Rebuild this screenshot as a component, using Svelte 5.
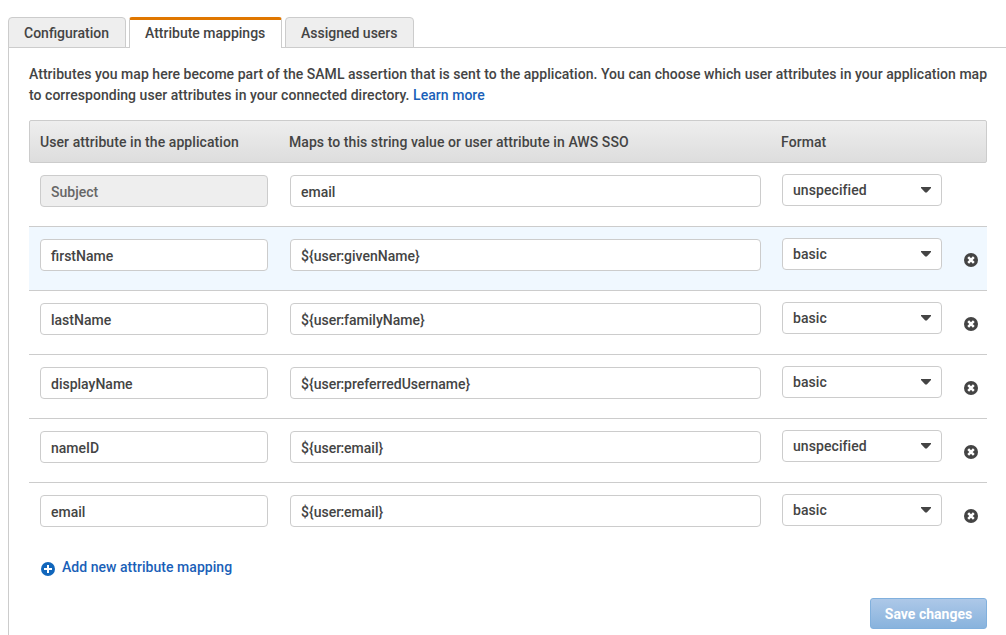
<script>
  const tabs = ['Configuration', 'Attribute mappings', 'Assigned users'];
  const active = 1;
  const rows = [
    { name: 'Subject', value: 'email', format: 'unspecified', locked: true },
    { name: 'firstName', value: '${user:givenName}', format: 'basic', hover: true },
    { name: 'lastName', value: '${user:familyName}', format: 'basic' },
    { name: 'displayName', value: '${user:preferredUsername}', format: 'basic' },
    { name: 'nameID', value: '${user:email}', format: 'unspecified' },
    { name: 'email', value: '${user:email}', format: 'basic' }
  ];
</script>

<div class="page">
  <nav class="tabs">
    {#each tabs as tab, i}
      <div class="tab" class:active={i === active}>{tab}</div>
    {/each}
  </nav>
  <main class="panel">
    <p class="intro">
      Attributes you map here become part of the SAML assertion that is sent to the application. You can choose which user attributes in your application map<br />to corresponding user attributes in your connected directory. <span class="link">Learn more</span>
    </p>
    <div class="head">
      <div>User attribute in the application</div>
      <div>Maps to this string value or user attribute in AWS SSO</div>
      <div>Format</div>
    </div>
    {#each rows as row}
      <div class="row" class:hover={row.hover}>
        <div class="field name" class:locked={row.locked}>{row.name}</div>
        <div class="field value">
          {#if row.value.includes(':')}<span class="tight">{row.value.split(':')[0]}</span>:{row.value.split(':')[1]}{:else}{row.value}{/if}
        </div>
        <div class="select">
          <span>{row.format}</span>
          <svg width="10" height="6" viewBox="0 0 10 6"><path d="M0 0h10v1L5.8 5.6H4.2L0 1z" fill="#444" /></svg>
        </div>
        {#if !row.locked}
          <svg class="remove" width="14" height="14" viewBox="0 0 14 14">
            <circle cx="7" cy="7" r="7" fill="#444" />
            <path d="M4.2 4.2l5.6 5.6M9.8 4.2l-5.6 5.6" stroke="#fff" stroke-width="2.5" />
          </svg>
        {/if}
      </div>
    {/each}
    <div class="add">
      <svg width="14" height="14" viewBox="0 0 14 14">
        <circle cx="7" cy="7" r="7" fill="#1166bb" />
        <path d="M7 3v8M3 7h8" stroke="#fff" stroke-width="2" />
      </svg>
      <span>Add new attribute mapping</span>
    </div>
    <div class="actions"><button>Save changes</button></div>
  </main>
</div>

<style>
  :global(body) { background: #fff; overflow: hidden; }
  .page {
    box-sizing: border-box;
    width: 1006px;
    height: 635px;
    padding: 17px 0 0 8px;
    display: flex;
    flex-direction: column;
    color: #444;
    font: 500 14px/20px Roboto, sans-serif;
  }
  .tabs {
    display: flex;
    gap: 3px;
    height: 31px;
    background: linear-gradient(#ccc, #ccc) 0 100% / 100% 1px no-repeat;
  }
  .tab {
    box-sizing: border-box;
    padding: 0 15px;
    border: 1px solid #ccc;
    border-radius: 4px 4px 0 0;
    background: #eee;
    line-height: 31px;
    white-space: nowrap;
  }
  .tab:first-child { width: 118px; }
  .tab:last-child { width: 129px; }
  .tab.active {
    width: 153px;
    border-top: 3px solid #e07700;
    border-bottom: 0;
    border-radius: 3px 3px 0 0;
    background: #fff;
    line-height: 27px;
  }
  .panel {
    box-sizing: border-box;
    flex: 1;
    border-left: 1px solid #ccc;
    padding: 16px 19px 0 20px;
  }
  .intro {
    height: 42px;
    margin: 0 0 14px;
    line-height: 21px;
    letter-spacing: 0.04px;
    white-space: nowrap;
  }
  .link, .add { color: #1a5fb8; }
  .head, .row { box-sizing: border-box; display: grid; }
  .head {
    grid-template-columns: 249px 492px 182px;
    height: 43px;
    border: 1px solid #ccc;
    border-radius: 2px;
    background: linear-gradient(#eee, #ddd);
    padding: 0 10px;
    line-height: 43px;
    letter-spacing: 0.07px;
  }
  .row {
    grid-template-columns: 250px 492px 182px 14px;
    align-items: start;
    height: 64px;
    padding: 12px 0 0 11px;
    border-bottom: 1px solid #ccc;
  }
  .row:nth-last-child(3) { border-bottom: 0; }
  .row.hover { background: #f0f8ff; }
  .field, .select {
    box-sizing: border-box;
    height: 32px;
    border: 1px solid #ccc;
    border-radius: 4px;
    background: #fff;
    padding: 0 10px;
    line-height: 32px;
  }
  .name { width: 228px; }
  .value { width: 471px; }
  .tight { margin-right: -1px; letter-spacing: 0.05px; }
  .locked { background: #eee; color: #666; }
  .select {
    width: 160px;
    margin-top: -1px;
    line-height: 30px;
    display: flex;
    justify-content: space-between;
    align-items: center;
  }
  .select span { letter-spacing: 0.07px; }
  .remove { margin-top: 14px; }
  .add {
    display: flex;
    align-items: center;
    gap: 7px;
    height: 20px;
    padding: 10px 0 0 12px;
    letter-spacing: 0.04px;
  }
  .add svg { margin-top: 3px; }
  .actions { display: flex; justify-content: flex-end; padding-top: 21px; }
  button {
    width: 117px;
    height: 31px;
    padding: 2px 0 0;
    border: 1px solid #81b0dd;
    border-radius: 3px;
    background: linear-gradient(#adc8e8, #88b3dd);
    color: #fff;
    font: 700 14px/27px Roboto, sans-serif;
  }
</style>
